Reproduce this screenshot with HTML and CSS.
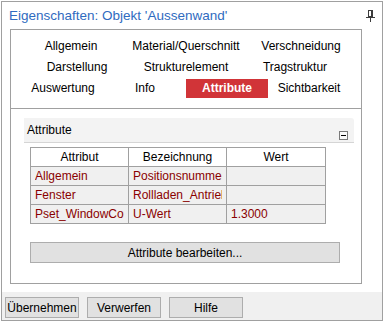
FILE: index.html
```html
<!DOCTYPE html>
<html lang="de">
<head>
    <meta charset="UTF-8">
    <title>Eigenschaften</title>
    <link rel="stylesheet" href="styles.css">
</head>
<body>
    <div class="window">
        <div class="title-bar">
            <span class="title">Eigenschaften: Objekt 'Aussenwand'</span>
            <svg class="pin" width="9" height="12" viewBox="0 0 9 12">
                <rect x="2.5" y="0.5" width="4" height="6" fill="none" stroke="#3c3c3c"/>
                <line x1="5.5" y1="1" x2="5.5" y2="6" stroke="#3c3c3c"/>
                <line x1="0" y1="7.5" x2="9" y2="7.5" stroke="#3c3c3c"/>
                <line x1="4.5" y1="8" x2="4.5" y2="12" stroke="#3c3c3c"/>
            </svg>
        </div>

        <div class="panel">
            <div class="tabs">
                <div class="tab-row row-wide">
                    <span class="tab">Allgemein</span>
                    <span class="tab">Material/Querschnitt</span>
                    <span class="tab">Verschneidung</span>
                </div>
                <div class="tab-row row-mid">
                    <span class="tab">Darstellung</span>
                    <span class="tab">Strukturelement</span>
                    <span class="tab">Tragstruktur</span>
                </div>
                <div class="tab-row row-four">
                    <span class="tab">Auswertung</span>
                    <span class="tab">Info</span>
                    <span class="tab active">Attribute</span>
                    <span class="tab">Sichtbarkeit</span>
                </div>
            </div>

            <div class="section">
                <div class="section-head">
                    <span>Attribute</span>
                    <span class="collapse"></span>
                </div>
                <table class="attr-table">
                    <colgroup>
                        <col class="col-a">
                        <col class="col-b">
                        <col class="col-c">
                    </colgroup>
                    <tr class="head-row">
                        <th>Attribut</th>
                        <th>Bezeichnung</th>
                        <th>Wert</th>
                    </tr>
                    <tr>
                        <td><div class="cell">Allgemein</div></td>
                        <td><div class="cell">Positionsnummer</div></td>
                        <td></td>
                    </tr>
                    <tr>
                        <td><div class="cell">Fenster</div></td>
                        <td><div class="cell">Rollladen_Antrieb</div></td>
                        <td></td>
                    </tr>
                    <tr>
                        <td><div class="cell">Pset_WindowCommon</div></td>
                        <td><div class="cell">U-Wert</div></td>
                        <td><div class="cell">1.3000</div></td>
                    </tr>
                </table>
                <button class="wide-btn">Attribute bearbeiten...</button>
            </div>
        </div>

        <div class="footer">
            <button class="btn">Übernehmen</button>
            <button class="btn">Verwerfen</button>
            <button class="btn">Hilfe</button>
        </div>
    </div>
</body>
</html>
```

FILE: styles.css
```css
* {
    margin: 0;
    padding: 0;
    box-sizing: border-box;
}
body {
    font-family: "Liberation Sans", Arial, sans-serif;
    font-size: 12px;
    color: #000;
    background-color: #fff;
}
.window {
    margin: 1px;
    width: 382px;
    height: 320px;
    border: 1px solid #a0a0a0;
    display: flex;
    flex-direction: column;
}
.title-bar {
    height: 27px;
    display: flex;
    align-items: center;
    justify-content: space-between;
    padding: 0 7px 0 7px;
}
.title {
    font-size: 13.5px;
    color: #2f6bc0;
}
.panel {
    margin-left: 8px;
    width: 352px;
    height: 255px;
    border: 1px solid #a0a0a0;
}
.tabs {
    display: flex;
    flex-direction: column;
    gap: 2px;
    padding: 7px 0 10px;
    border-bottom: 1px solid #a0a0a0;
}
.tab-row {
    display: grid;
    justify-content: center;
}
.row-wide {
    grid-template-columns: repeat(3, 115px);
}
.row-mid {
    grid-template-columns: repeat(3, 109px);
}
.row-four {
    grid-template-columns: repeat(4, 82px);
}
.tab {
    height: 19px;
    line-height: 19px;
    text-align: center;
    white-space: nowrap;
}
.tab.active {
    background-color: #d13438;
    color: #fff;
    font-weight: bold;
}
.section {
    margin: 9px 7px 0 13px;
}
.section-head {
    height: 25px;
    display: flex;
    align-items: center;
    justify-content: space-between;
    padding: 0 6px 0 3px;
    background-color: #f3f3f3;
    border-bottom: 1px solid #d5d5d5;
    border-top-right-radius: 3px;
}
.collapse {
    width: 9px;
    height: 9px;
    align-self: flex-end;
    margin-bottom: 2px;
    border: 1px solid #7a7a7a;
    background-color: #fafafa;
    display: flex;
    align-items: center;
    justify-content: center;
}
.collapse:after {
    content: '';
    width: 5px;
    height: 1px;
    background-color: #000;
}
.attr-table {
    margin: 4px 0 0 6px;
    width: 295px;
    border-collapse: collapse;
    table-layout: fixed;
}
.col-a, .col-b {
    width: 98px;
}
.col-c {
    width: 99px;
}
.attr-table th,
.attr-table td {
    height: 19px;
    border: 1px solid #a0a0a0;
    padding: 0 4px;
    font-weight: normal;
}
.attr-table th {
    background-color: #fff;
    text-align: center;
}
.attr-table td {
    background-color: #f0f0f0;
    color: #8a0000;
    text-align: left;
}
.cell {
    white-space: nowrap;
    overflow: hidden;
}
.wide-btn {
    display: block;
    margin: 18px 0 0 6px;
    width: 310px;
    height: 21px;
    font: inherit;
    background-color: #e1e1e1;
    border: 1px solid #adadad;
}
.footer {
    flex: 1;
    margin-top: 8px;
    display: flex;
    align-items: flex-start;
    gap: 8px;
    padding: 5px 0 0 3px;
    background-color: #f0f0f0;
}
.btn {
    width: 74px;
    height: 21px;
    font: inherit;
    background-color: #e1e1e1;
    border: 1px solid #adadad;
}
```
